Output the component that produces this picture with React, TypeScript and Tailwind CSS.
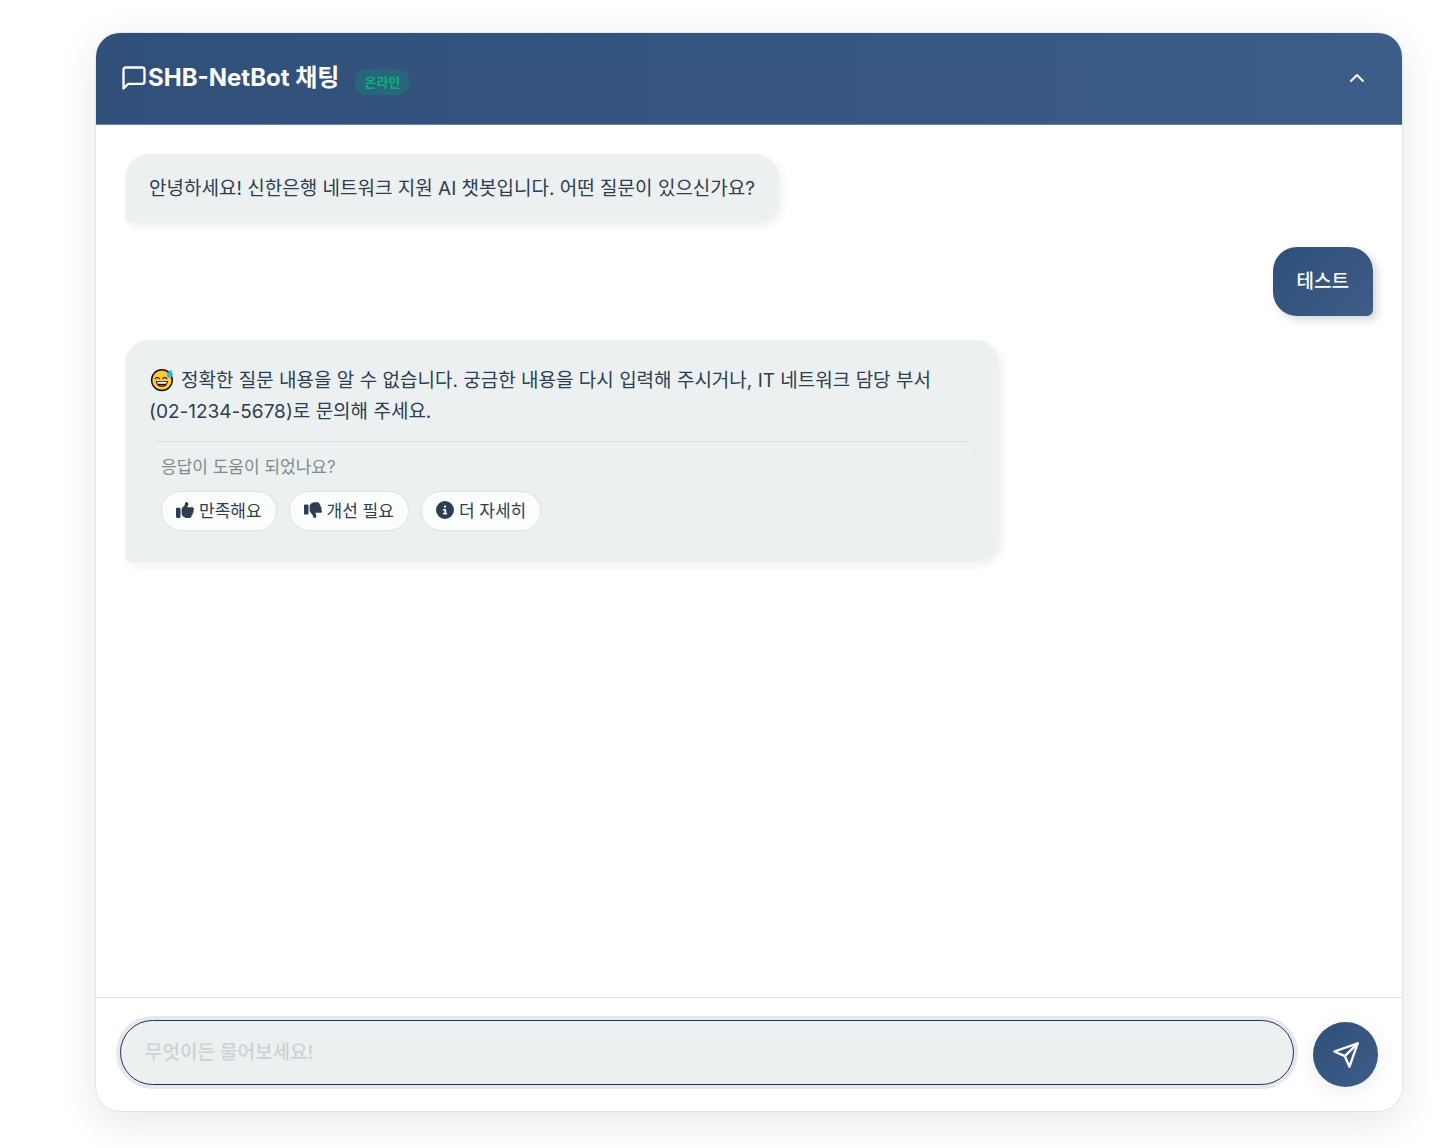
import { FiMessageSquare, FiChevronUp, FiSend } from "react-icons/fi";
import { FaThumbsUp, FaThumbsDown, FaCircleInfo } from "react-icons/fa6";

function SweatSmile() {
  return (
    <svg viewBox="0 0 24 24" className="mr-[7px] inline-block size-[25px] align-[-5px]" role="img" aria-label="😅">
      <circle cx="12.4" cy="12.6" r="9.900" fill="#ffc83d" stroke="#111" strokeWidth="1.4" />
      <path d="M6 11.200q2-2.400 4 0M13.200 11.200q2-2.400 4 0" fill="none" stroke="#111" strokeWidth="1" strokeLinecap="round" />
      <path d="M6.600 13.400h11.600a5.800 5.800 0 0 1-11.600 0Z" fill="#111" />
      <path d="M7.800 14.200h9.200l-.5 1.800H8.300Z" fill="#fff" />
      <path d="M10 18.100q2.400-1.600 4.800 0q-2.400 1.500-4.800 0Z" fill="#f03a17" />
      <path d="M20.800 2.500c-1.800 2.200-3.600 3.900-3.600 5.500a2.900 2.900 0 0 0 5.600 0c.2-1.400-.7-3.300-2-5.500Z" fill="#26b8ea" />
    </svg>
  );
}

const feedback = [
  { label: "만족해요", Icon: FaThumbsUp },
  { label: "개선 필요", Icon: FaThumbsDown },
  { label: "더 자세히", Icon: FaCircleInfo },
];

const botBubble =
  "self-start rounded-3xl rounded-bl-md bg-[#ecf0f1] px-6 text-[#2c3e50] shadow-[4px_4px_8px_rgba(0,0,0,0.06)]";

export default function App() {
  return (
    <div className="flex min-h-screen bg-white pt-[33px] pr-[42px] pb-[37px] pl-24 font-[Inter,'Noto_Sans_CJK_KR',sans-serif] text-[19px] leading-[31px]">
      <main className="flex grow flex-col overflow-hidden rounded-3xl bg-white shadow-[0_0_0_1px_rgba(0,0,0,0.06),0_10px_40px_rgba(0,0,0,0.1)]">
        <header className="flex h-[92px] items-center justify-between border-b border-[#6880a1] bg-linear-to-r from-[#30507a] to-[#3d5d89] pr-[29px] pb-0.5 pl-6 text-white">
          <div className="flex items-center">
            <FiMessageSquare className="size-7" />
            <h1 className="text-2xl font-bold">SHB-NetBot 채팅</h1>
            <span className="mt-2 ml-4 rounded-xl bg-[#00b67a]/20 px-[9px] text-[13px] leading-[26px] font-bold text-[#00b67a]">온라인</span>
          </div>
          <button type="button" aria-label="접기" className="p-1">
            <FiChevronUp className="size-6" />
          </button>
        </header>
        <section className="flex grow flex-col gap-6 px-[29px] pt-[29px]" aria-label="대화">
          <p className={`${botBubble} py-[19px]`}>
            안녕하세요! 신한은행 네트워크 지원 AI 챗봇입니다. 어떤 질문이 있으신가요?
          </p>
          <p className="self-end rounded-3xl rounded-br-md bg-linear-135 from-[#2f5078] to-[#3d5d89] px-6 py-[19px] font-medium text-white shadow-[4px_4px_8px_rgba(0,0,0,0.16)]">
            테스트
          </p>
          <div className={`${botBubble} max-w-[70%] pt-[25px] pb-[19px]`}>
            <p>
              <SweatSmile />
              정확한 질문 내용을 알 수 없습니다. 궁금한 내용을 다시 입력해 주시거나, IT 네트워크 담당 부서
              <wbr />
              <span className="whitespace-nowrap">(02-1234-5678)로</span> 문의해 주세요.
            </p>
            <div className="mt-3.5 rounded-xl border-t border-[#d9dddf] p-3 text-[17px] leading-[26px]">
              <p className="text-[#7f8c8d]">응답이 도움이 되었나요?</p>
              <div className="mt-[11px] flex gap-3">
                {feedback.map(({ label, Icon }) => (
                  <button key={label} type="button" className="flex h-10 items-center gap-[5px] rounded-full border border-[#dfe3e5] bg-[#fcfdfd] px-3.5">
                    <Icon className="mb-0.5 size-[18px]" />
                    {label}
                  </button>
                ))}
              </div>
            </div>
          </div>
        </section>
        <form className="flex items-start gap-[19px] border-t border-[#e2e3e5] px-6 pt-[22px] pb-6">
          <input
            aria-label="메시지"
            placeholder="무엇이든 물어보세요!"
            className="h-[65px] min-w-0 grow rounded-full border border-[#1e3559] bg-[#ecf0f1] px-6 ring-4 ring-[#e6e8ed] outline-none placeholder:font-medium placeholder:text-[#cdd2d6]"
          />
          <button type="button" aria-label="보내기" className="mt-0.5 flex size-[65px] shrink-0 items-center justify-center rounded-full bg-linear-135 from-[#2f5078] to-[#3d5d89] text-white shadow-[0_4px_20px_rgba(0,0,0,0.08)]">
            <FiSend className="size-7" />
          </button>
        </form>
      </main>
    </div>
  );
}
